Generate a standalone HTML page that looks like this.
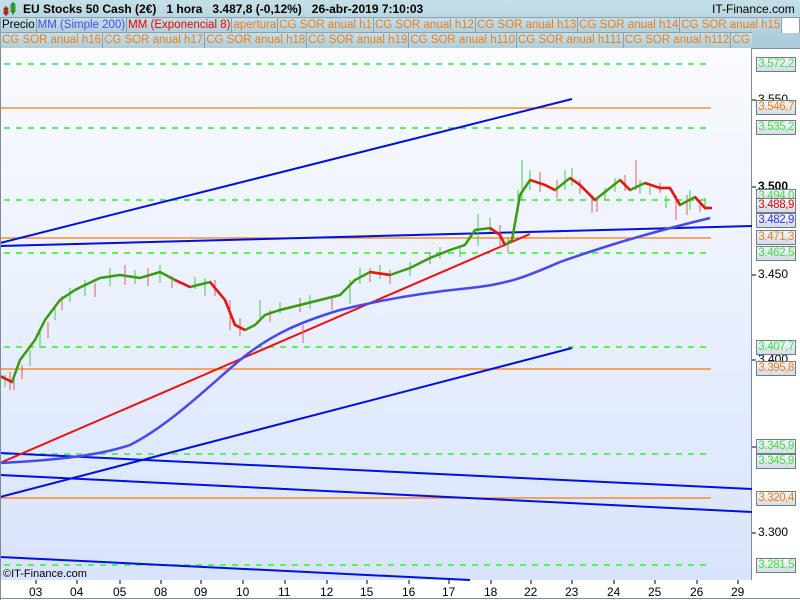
<!DOCTYPE html>
<html><head><meta charset="utf-8"><style>
body{margin:0;width:800px;height:600px;overflow:hidden;background:#fff;font-family:"Liberation Sans",sans-serif;position:relative}
#top{position:absolute;left:0;top:0;width:800px;height:48px;background:linear-gradient(#c4dfe8,#a9c9d6);border-bottom:1px solid #7890a0}
.t{position:absolute;top:2px;font-size:12px;font-weight:bold;color:#000;white-space:nowrap}
.row{position:absolute;left:0;height:16px;display:flex;font-size:11.5px;overflow:hidden}
.row span{flex:none;display:block;height:15px;line-height:15px;padding:0 1px;border:1px solid #8aa0ae;border-left:none;color:#f07c1c;background:linear-gradient(#c4dfe8,#b0ced9);white-space:nowrap}
#chart{position:absolute;left:0;top:48px;width:751px;height:532px;background:linear-gradient(#fafbff,#d8e4fc);border-right:1px solid #7f8c94}
.lbl{position:absolute;left:756px;width:40px;height:15px;box-sizing:border-box;border:1px solid #6c7c88;background:linear-gradient(#f4f6fa,#d4dce8);font-size:11.5px;letter-spacing:-0.4px;line-height:13px;text-align:right;padding-right:1px;overflow:hidden;white-space:nowrap}
.ax{position:absolute;left:758px;font-size:12px;color:#000}
.xl{position:absolute;top:585px;font-size:12px}
</style></head><body>
<div id="top">
<svg style="position:absolute;left:3px;top:2px" width="14" height="14"><rect x="1" y="6" width="4" height="6" fill="#e04040" stroke="#800" stroke-width=".6"/><line x1="3" y1="4" x2="3" y2="14" stroke="#800"/><rect x="8" y="2" width="4" height="8" fill="#40d040" stroke="#060" stroke-width=".6"/><line x1="10" y1="0" x2="10" y2="13" stroke="#060"/></svg>
<div class="t" style="left:23px">EU Stocks 50 Cash (2€)&nbsp;&nbsp;&nbsp;1 hora&nbsp;&nbsp;&nbsp;3.487,8 (-0,12%)&nbsp;&nbsp;&nbsp;26-abr-2019 7:10:03</div>
<div class="t" style="left:712px;font-weight:normal;font-size:12px">IT-Finance.com</div>
<div class="row" style="top:17px"><span style="color:#000;border-left:1px solid #8aa0ae">Precio</span><span style="color:#4848ff">MM (Simple 200)</span><span style="color:#f00000">MM (Exponencial 8)</span><span>apertura</span><span>CG SOR anual h1</span><span>CG SOR anual h12</span><span>CG SOR anual h13</span><span>CG SOR anual h14</span><span>CG SOR anual h15</span><span style="background:#fff;width:15px"></span></div>
<div class="row" style="top:32px;width:752px"><span style="border-left:1px solid #8aa0ae">CG SOR anual h16</span><span>CG SOR anual h17</span><span>CG SOR anual h18</span><span>CG SOR anual h19</span><span>CG SOR anual h110</span><span>CG SOR anual h111</span><span>CG SOR anual h112</span><span>CG SOR anual h113</span></div>
</div>
<div id="chart"></div>
<svg style="position:absolute;left:0;top:0" width="800" height="600">
<g stroke="#5cf05c" stroke-width="2" stroke-dasharray="6,6">
<line x1="4" y1="64" x2="710" y2="64"/><line x1="4" y1="128" x2="710" y2="128"/><line x1="4" y1="200" x2="710" y2="200"/><line x1="4" y1="253" x2="710" y2="253"/><line x1="4" y1="347" x2="710" y2="347"/><line x1="4" y1="454" x2="710" y2="454"/><line x1="4" y1="565" x2="710" y2="565"/></g>
<g stroke="#ff7c00" stroke-width="1.3"><line x1="0" y1="108" x2="711" y2="108"/><line x1="0" y1="238" x2="711" y2="238"/><line x1="0" y1="369" x2="711" y2="369"/><line x1="0" y1="498" x2="711" y2="498"/></g>
<g stroke="#0010e0" stroke-width="2"><line x1="0" y1="243" x2="572" y2="99"/><line x1="0" y1="246" x2="752" y2="226"/><line x1="0" y1="497" x2="572" y2="348"/><line x1="0" y1="453" x2="752" y2="489"/><line x1="0" y1="475" x2="752" y2="512"/><line x1="0" y1="557" x2="470" y2="580"/></g>
<line x1="0" y1="463" x2="530" y2="234" stroke="#f01010" stroke-width="2"/>
<path fill="none" stroke="#4848f0" stroke-width="2.5" d="M0,463 C60,460 100,455 130,445 C170,425 210,385 240,360 C270,335 300,322 340,310 C380,300 420,293 470,288 C510,284 530,275 560,262 C600,248 640,235 710,218"/>
<g stroke-width="1">
<path stroke="#e06060" d="M10,372v18M14,378v12M22,365v14M48,322v16M62,296v14M95,283v14M125,265v20M148,268v18M172,276v12M215,280v16M230,300v30M240,318v18M270,310v12M300,298v14M303,325v18M332,298v12M370,268v14M390,270v14M430,252v12M500,225v22M508,238v14M540,172v20M557,180v18M580,180v14M592,195v18M597,198v14M625,175v16M636,160v30M660,183v10M676,195v25M687,195v20M700,200v12"/>
<path stroke="#40d040" d="M5,375v12M30,350v16M40,330v18M55,306v14M70,288v14M85,280v16M110,268v18M135,270v14M160,265v18M195,277v12M205,278v18M260,300v22M280,302v12M310,295v14M350,280v24M360,268v16M380,265v14M410,262v14M440,247v12M460,245v12M478,214v32M490,218v14M518,190v22M522,160v40M530,170v20M565,170v20M572,168v18M605,188v12M615,178v14M640,180v14M650,185v10M666,196v12M690,190v20M705,198v12"/>
</g>
<polyline fill="none" stroke="#3a9a10" stroke-width="2.5" points="0,376 12,382 20,360 35,340 45,320 60,300 75,290 85,285 100,278 120,275 140,278 160,272 175,280 190,287 210,282 225,300 235,325 245,330 255,325 265,315 280,310 300,305 320,300 340,295 355,280 370,272 390,275 410,268 430,258 450,250 465,245 475,230 490,228 500,235 505,245 512,240 520,195 530,180 545,185 555,190 570,178 580,185 595,200 610,188 620,180 630,190 645,183 660,188 670,188 680,205 695,197 705,208 712,208"/>
<g fill="none" stroke="#f01010" stroke-width="2.5">
<polyline points="0,376 12,382"/><polyline points="175,280 190,287"/><polyline points="210,282 225,300 235,325 245,330"/><polyline points="370,272 390,275"/><polyline points="490,228 500,235 505,245"/><polyline points="530,180 545,185 555,190"/><polyline points="570,178 580,185 595,200"/><polyline points="620,180 630,190"/><polyline points="645,183 660,188 670,188 680,205"/><polyline points="695,197 705,208 712,208"/></g>
<g stroke="#000"><line x1="752" y1="100" x2="756" y2="100"/><line x1="752" y1="187" x2="756" y2="187"/><line x1="752" y1="275" x2="756" y2="275"/><line x1="752" y1="360" x2="756" y2="360"/><line x1="752" y1="447" x2="756" y2="447"/><line x1="752" y1="533" x2="756" y2="533"/>
<line x1="36" y1="580" x2="36" y2="584"/><line x1="77" y1="580" x2="77" y2="584"/><line x1="120" y1="580" x2="120" y2="584"/><line x1="161" y1="580" x2="161" y2="584"/><line x1="201" y1="580" x2="201" y2="584"/><line x1="243" y1="580" x2="243" y2="584"/><line x1="285" y1="580" x2="285" y2="584"/><line x1="327" y1="580" x2="327" y2="584"/><line x1="367" y1="580" x2="367" y2="584"/><line x1="409" y1="580" x2="409" y2="584"/><line x1="449" y1="580" x2="449" y2="584"/><line x1="491" y1="580" x2="491" y2="584"/><line x1="531" y1="580" x2="531" y2="584"/><line x1="572" y1="580" x2="572" y2="584"/><line x1="614" y1="580" x2="614" y2="584"/><line x1="655" y1="580" x2="655" y2="584"/><line x1="697" y1="580" x2="697" y2="584"/><line x1="738" y1="580" x2="738" y2="584"/></g>
<line x1="0" y1="598.5" x2="800" y2="598.5" stroke="#7f8c94"/>
<line x1="0.5" y1="48" x2="0.5" y2="600" stroke="#7f8c94"/>
</svg>
<div class="ax" style="top:92px">3.550</div><div class="ax" style="top:179px;font-weight:bold">3.500</div><div class="ax" style="top:267px">3.450</div><div class="ax" style="top:352px">3.400</div><div class="ax" style="top:525px">3.300</div>
<div class="lbl" style="top:57px;color:#40e040">3.572,2</div>
<div class="lbl" style="top:100px;color:#f07c10">3.546,7</div>
<div class="lbl" style="top:120px;color:#40e040">3.535,2</div>
<div class="lbl" style="top:189px;color:#40e040">3.494,0</div>
<div class="lbl" style="top:198px;color:#f00000">3.488,9</div>
<div class="lbl" style="top:213px;color:#3030f0">3.482,9</div>
<div class="lbl" style="top:230px;color:#f07c10">3.471,3</div>
<div class="lbl" style="top:246px;color:#40e040">3.462,5</div>
<div class="lbl" style="top:340px;color:#40e040">3.407,7</div>
<div class="lbl" style="top:361px;color:#f07c10">3.395,8</div>
<div class="lbl" style="top:439px;color:#40e040">3.345,9</div>
<div class="lbl" style="top:454px;color:#40e040">3.345,9</div>
<div class="lbl" style="top:491px;color:#f07c10">3.320,4</div>
<div class="lbl" style="top:558px;color:#40e040">3.281,5</div>
<div style="position:absolute;left:3px;top:568px;font-size:11px">©IT-Finance.com</div>
<div class="xl" style="left:29px">03</div><div class="xl" style="left:70px">04</div><div class="xl" style="left:113px">05</div><div class="xl" style="left:154px">08</div><div class="xl" style="left:194px">09</div><div class="xl" style="left:236px">10</div><div class="xl" style="left:278px">11</div><div class="xl" style="left:320px">12</div><div class="xl" style="left:360px">15</div><div class="xl" style="left:402px">16</div><div class="xl" style="left:442px">17</div><div class="xl" style="left:484px">18</div><div class="xl" style="left:524px">22</div><div class="xl" style="left:565px">23</div><div class="xl" style="left:607px">24</div><div class="xl" style="left:648px">25</div><div class="xl" style="left:690px">26</div><div class="xl" style="left:731px">29</div>
</body></html>
